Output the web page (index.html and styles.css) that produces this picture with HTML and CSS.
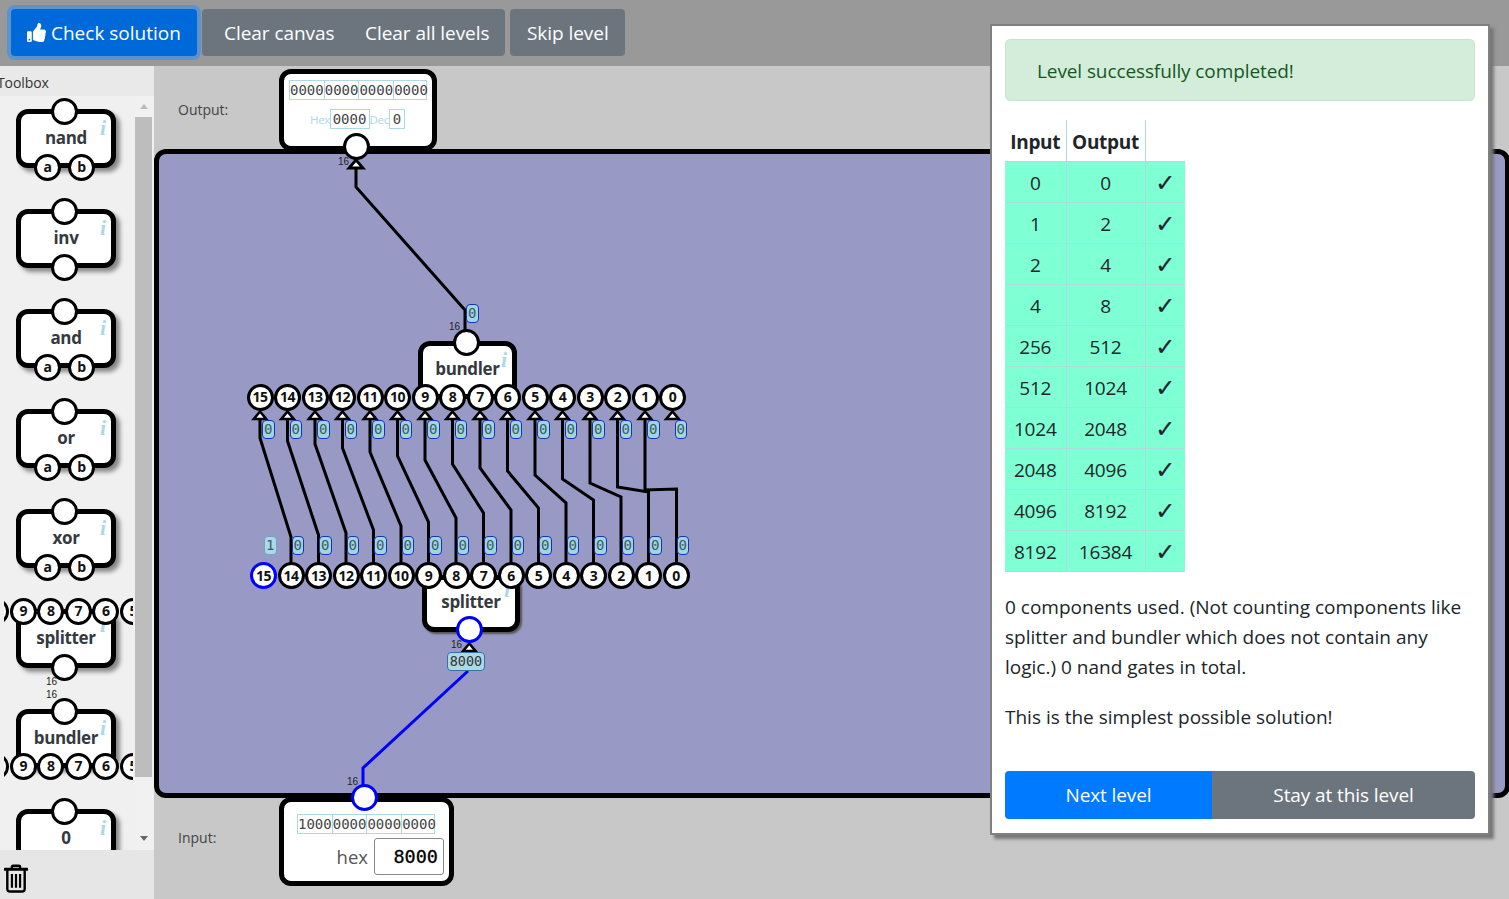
FILE: index.html
```html
<!DOCTYPE html>
<html lang="en">
<head>
<meta charset="utf-8">
<title>Level</title>
<link rel="stylesheet" href="styles.css">
</head>
<body>
<header class="topbar">
  <button class="btn btn-primary">
    <svg class="thumb" viewBox="0 0 512 512"><path fill="#fff" d="M104 224H24c-13.255 0-24 10.745-24 24v240c0 13.255 10.745 24 24 24h80c13.255 0 24-10.745 24-24V248c0-13.255-10.745-24-24-24zM64 472c-13.255 0-24-10.745-24-24s10.745-24 24-24 24 10.745 24 24-10.745 24-24 24zM384 81.452c0 42.416-25.97 66.208-33.277 94.548h101.723c33.397 0 59.397 27.746 59.553 58.098.084 17.938-7.546 37.249-19.439 49.197l-.11.11c9.836 23.337 8.237 56.037-9.308 79.469 8.681 25.895-.069 57.704-16.382 74.757 4.298 17.598 2.244 32.575-6.148 44.632C440.202 511.587 389.616 512 346.839 512l-2.845-.001c-48.287-.017-87.806-17.598-119.56-31.725-15.957-7.099-36.821-15.887-52.651-16.178-6.54-.12-11.783-5.457-11.783-11.998v-213.77c0-3.2 1.282-6.271 3.558-8.521 39.614-39.144 56.648-80.587 89.117-113.111 14.804-14.832 20.188-37.236 25.393-58.902C282.515 39.293 291.817 0 312 0c24 0 72 8 72 81.452z"/></svg>
    <span>Check solution</span>
  </button>
  <div class="btn-group">
    <button class="btn btn-grey btn-clear">Clear canvas</button>
    <button class="btn btn-grey btn-all">Clear all levels</button>
  </div>
  <button class="btn btn-grey btn-skip">Skip level</button>
</header>

<main class="main">
  <aside class="sidebar">
    <div class="toolbox-title">Toolbox</div>
    <div class="tool-area">
      <div class="tool-list">
        <div class="comp"><span class="pin p-top"></span><b class="name">nand</b><i class="info">i</i><span class="pin p-a">a</span><span class="pin p-b">b</span></div>
        <div class="comp"><span class="pin p-top"></span><b class="name">inv</b><i class="info">i</i><span class="pin p-bottom"></span></div>
        <div class="comp"><span class="pin p-top"></span><b class="name">and</b><i class="info">i</i><span class="pin p-a">a</span><span class="pin p-b">b</span></div>
        <div class="comp"><span class="pin p-top"></span><b class="name">or</b><i class="info">i</i><span class="pin p-a">a</span><span class="pin p-b">b</span></div>
        <div class="comp"><span class="pin p-top"></span><b class="name">xor</b><i class="info">i</i><span class="pin p-a">a</span><span class="pin p-b">b</span></div>
        <div class="comp">
          <div class="pin-row row-tool-top"><span class="pin">15</span><span class="pin">14</span><span class="pin">13</span><span class="pin">12</span><span class="pin">11</span><span class="pin">10</span><span class="pin">9</span><span class="pin">8</span><span class="pin">7</span><span class="pin">6</span><span class="pin">5</span><span class="pin">4</span><span class="pin">3</span><span class="pin">2</span><span class="pin">1</span><span class="pin">0</span></div>
          <b class="name">splitter</b><i class="info info-low">i</i><span class="pin p-bottom"></span><span class="wl wl-under">16</span>
        </div>
        <div class="comp">
          <span class="wl wl-over">16</span><span class="pin p-top"></span><b class="name">bundler</b><i class="info">i</i>
          <div class="pin-row row-tool-bottom"><span class="pin">15</span><span class="pin">14</span><span class="pin">13</span><span class="pin">12</span><span class="pin">11</span><span class="pin">10</span><span class="pin">9</span><span class="pin">8</span><span class="pin">7</span><span class="pin">6</span><span class="pin">5</span><span class="pin">4</span><span class="pin">3</span><span class="pin">2</span><span class="pin">1</span><span class="pin">0</span></div>
        </div>
        <div class="comp"><span class="pin p-top"></span><b class="name">0</b><i class="info">i</i></div>
      </div>
      <div class="scrollbar">
        <div class="sb-btn"><span class="arrow-up"></span></div>
        <div class="sb-thumb"></div>
        <div class="sb-track"></div>
        <div class="sb-btn sb-btn-down"><span class="arrow-down"></span></div>
      </div>
    </div>
    <div class="trash-area">
      <svg class="trash" viewBox="0 0 26 30" fill="none" stroke="#000" stroke-width="2.6">
        <path d="M8.5 4.5V2.6a1.4 1.4 0 0 1 1.4-1.4h6.2a1.4 1.4 0 0 1 1.4 1.4v1.9"/>
        <path d="M1 5h24" stroke-width="3.2" stroke-linecap="round"/>
        <path d="M3.6 6v20.5a2.6 2.6 0 0 0 2.6 2.6h13.6a2.6 2.6 0 0 0 2.6-2.6V6"/>
        <path d="M8.6 10v15M13 10v15M17.4 10v15" stroke-width="2.4"/>
      </svg>
    </div>
  </aside>

  <section class="workspace">
    <div class="lbl lbl-output">Output:</div>
    <div class="lbl lbl-input">Input:</div>
    <div class="canvas"></div>

    <svg class="wires" viewBox="154 66 1355 833" fill="none">
      <defs>
        <polygon id="tri" points="0,-7.5 -6.2,0 6.2,0" fill="#fff" stroke="#000" stroke-width="2.6"/>
        <polygon id="tri-big" points="0,-8 -7,0 7,0" fill="#fff" stroke="#000" stroke-width="2.8"/>
      </defs>
      <g stroke="#000" stroke-width="3">
        <path d="M356 168V187L465 310V332"/>
        <path d="M260 420V438L291 537V575"/>
        <path d="M287.5 420V441L318.5 535V575"/>
        <path d="M315 420V444L346 533V575"/>
        <path d="M342.5 420V448L373.5 530V575"/>
        <path d="M370 420V452L401 526V575"/>
        <path d="M397.5 420V456L428.5 522V575"/>
        <path d="M425 420V460L456 518V575"/>
        <path d="M452.5 420V464L483.5 513V575"/>
        <path d="M480 420V468L511 510V575"/>
        <path d="M507.5 420V471L538.5 508V575"/>
        <path d="M535 420V475L566 503V575"/>
        <path d="M562.5 420V479L593.5 500V575"/>
        <path d="M590 420V483L621 497V575"/>
        <path d="M617.5 420V487L648.5 492V575"/>
        <path d="M645 420V490L676.5 489V575"/>
      </g>
      <path d="M363 790V768L468 671" stroke="#0000ff" stroke-width="3"/>
      <use href="#tri" x="260" y="419"/><use href="#tri" x="287.5" y="419"/><use href="#tri" x="315" y="419"/><use href="#tri" x="342.5" y="419"/>
      <use href="#tri" x="370" y="419"/><use href="#tri" x="397.5" y="419"/><use href="#tri" x="425" y="419"/><use href="#tri" x="452.5" y="419"/>
      <use href="#tri" x="480" y="419"/><use href="#tri" x="507.5" y="419"/><use href="#tri" x="535" y="419"/><use href="#tri" x="562.5" y="419"/>
      <use href="#tri" x="590" y="419"/><use href="#tri" x="617.5" y="419"/><use href="#tri" x="645" y="419"/><use href="#tri" x="672.5" y="419"/>
      <use href="#tri-big" x="356" y="168"/>
      <use href="#tri" x="469.3" y="651"/>
      <g class="wire-label">
        <text x="338" y="165">16</text>
        <text x="449" y="330">16</text>
        <text x="451" y="648">16</text>
        <text x="347" y="785">16</text>
      </g>
    </svg>

    <div class="node box-output">
      <div class="bits"><span>0000</span><span>0000</span><span>0000</span><span>0000</span></div>
      <div class="hexrow"><small>Hex</small><span class="val val-hex">0000</span><small>Dec</small><span class="val val-dec">0</span></div>
    </div>
    <span class="pin free pin-output"></span>

    <div class="node comp comp-bundler">
      <span class="pin p-top-canvas"></span><b class="name">bundler</b><i class="info">i</i>
      <div class="pin-row row-bundler"><span class="pin">15</span><span class="pin">14</span><span class="pin">13</span><span class="pin">12</span><span class="pin">11</span><span class="pin">10</span><span class="pin">9</span><span class="pin">8</span><span class="pin">7</span><span class="pin">6</span><span class="pin">5</span><span class="pin">4</span><span class="pin">3</span><span class="pin">2</span><span class="pin">1</span><span class="pin">0</span></div>
    </div>

    <div class="node comp comp-splitter">
      <b class="name">splitter</b><i class="info">i</i>
      <div class="pin-row row-splitter"><span class="pin pin-blue">15</span><span class="pin">14</span><span class="pin">13</span><span class="pin">12</span><span class="pin">11</span><span class="pin">10</span><span class="pin">9</span><span class="pin">8</span><span class="pin">7</span><span class="pin">6</span><span class="pin">5</span><span class="pin">4</span><span class="pin">3</span><span class="pin">2</span><span class="pin">1</span><span class="pin">0</span></div>
      <span class="pin pin-blue p-bottom-canvas"></span>
    </div>

    <div class="badge-row badges-top"><span class="badge">0</span><span class="badge">0</span><span class="badge">0</span><span class="badge">0</span><span class="badge">0</span><span class="badge">0</span><span class="badge">0</span><span class="badge">0</span><span class="badge">0</span><span class="badge">0</span><span class="badge">0</span><span class="badge">0</span><span class="badge">0</span><span class="badge">0</span><span class="badge">0</span><span class="badge">0</span></div>
    <div class="badge-row badges-bottom"><span class="badge badge-on">1</span><span class="badge">0</span><span class="badge">0</span><span class="badge">0</span><span class="badge">0</span><span class="badge">0</span><span class="badge">0</span><span class="badge">0</span><span class="badge">0</span><span class="badge">0</span><span class="badge">0</span><span class="badge">0</span><span class="badge">0</span><span class="badge">0</span><span class="badge">0</span><span class="badge">0</span></div>
    <span class="badge free badge-bundle">0</span>
    <span class="badge badge-on free badge-input">8000</span>

    <div class="node box-input">
      <div class="bits"><span>1000</span><span>0000</span><span>0000</span><span>0000</span></div>
      <div class="inputrow"><span class="hexlabel">hex</span><span class="hexinput">8000</span></div>
    </div>
    <span class="pin pin-blue free pin-input"></span>
  </section>
</main>

<div class="dialog">
  <div class="alert">Level successfully completed!</div>
  <table class="truth">
    <thead><tr><th>Input</th><th>Output</th><th class="blank"></th></tr></thead>
    <tbody>
      <tr><td>0</td><td>0</td><td class="ok">✓</td></tr>
      <tr><td>1</td><td>2</td><td class="ok">✓</td></tr>
      <tr><td>2</td><td>4</td><td class="ok">✓</td></tr>
      <tr><td>4</td><td>8</td><td class="ok">✓</td></tr>
      <tr><td>256</td><td>512</td><td class="ok">✓</td></tr>
      <tr><td>512</td><td>1024</td><td class="ok">✓</td></tr>
      <tr><td>1024</td><td>2048</td><td class="ok">✓</td></tr>
      <tr><td>2048</td><td>4096</td><td class="ok">✓</td></tr>
      <tr><td>4096</td><td>8192</td><td class="ok">✓</td></tr>
      <tr><td>8192</td><td>16384</td><td class="ok">✓</td></tr>
    </tbody>
  </table>
  <p class="para">0 components used. (Not counting components like splitter and bundler which does not contain any logic.) 0 nand gates in total.</p>
  <p class="para para-2">This is the simplest possible solution!</p>
  <div class="actions">
    <button class="act act-next">Next level</button>
    <button class="act act-stay">Stay at this level</button>
  </div>
</div>
</body>
</html>
```
FILE: styles.css
```css
* { box-sizing: border-box; }
html, body { margin: 0; height: 899px; overflow: hidden; }
body { position: relative; background: #c8c8c8; font-family: "Open Sans", "Noto Sans", sans-serif; color: #212529; }

/* top bar */
.topbar { display: flex; align-items: flex-start; gap: 5px; height: 66px; padding: 9px 0 0 11px; background: #999; }
.btn { height: 47px; border: 0; border-radius: 4px; color: #fff; font: 19px "Open Sans", sans-serif; letter-spacing: -.05px; display: flex; align-items: center; }
.btn-primary { width: 186px; padding: 0 0 0 16px; background: #0069d9; box-shadow: 0 0 0 4px #5b93cf; gap: 5px; letter-spacing: 0; }
.thumb { width: 19px; height: 19px; }
.btn-grey { background: #6c757d; }
.btn-group { display: flex; }
.btn-clear { width: 147px; padding-left: 22px; border-radius: 4px 0 0 4px; }
.btn-all { width: 156px; padding-left: 16px; border-radius: 0 4px 4px 0; }
.btn-skip { width: 115px; padding-left: 17px; }

/* layout */
.main { display: flex; height: 833px; }
.sidebar { width: 154px; flex: none; display: flex; flex-direction: column; background: #e9e9e9; }
.toolbox-title { height: 30px; margin-left: -3px; padding-top: 7px; font-size: 14px; line-height: 20px; color: #333; letter-spacing: -.1px; }
.tool-area { display: flex; gap: 2px; height: 754px; padding-left: 4px; background: #f0f0f0; }
.tool-list { width: 129px; overflow: hidden; display: flex; flex-direction: column; gap: 41px; padding: 13px 0 0 12px; }
.scrollbar { width: 17px; display: flex; flex-direction: column; background: #f1f1f1; }
.sb-btn { height: 21px; flex: none; display: flex; align-items: center; justify-content: center; }
.sb-thumb { height: 660px; flex: none; background: #bdbdbd; }
.sb-track { flex: 1; }
.sb-btn-down { height: 24px; }
.arrow-up { border: 4.5px solid transparent; border-top: 0; border-bottom: 5px solid #bbb; }
.arrow-down { border: 4.5px solid transparent; border-bottom: 0; border-top: 5px solid #666; }
.trash-area { flex: 1; background: #e6e6e6; padding: 14px 0 0 4px; }
.trash { display: block; width: 24px; height: 29px; }

/* components */
.comp { position: relative; flex: none; width: 100px; height: 59px; border: 5px solid #000; border-radius: 12px; background: #fff; box-shadow: 4px 4px 4px #888; display: flex; align-items: center; justify-content: center; padding-bottom: 2px; }
.name { font-size: 17px; font-weight: 700; color: #343a40; line-height: 24px; letter-spacing: -.35px; }
.info { position: absolute; right: 5px; top: 4px; font: italic 700 22px/20px "Liberation Serif", serif; color: #add8e6; }
.info-low { top: 1px; }
.pin { position: relative; flex: none; display: flex; align-items: center; justify-content: center; width: 27px; height: 27px; border: 3px solid #000; border-radius: 50%; background: #fff; font: 700 14px/1 "Open Sans", sans-serif; color: #111; letter-spacing: -.5px; }
.pin-blue { border-color: #0000ff; }
.p-top, .p-a, .p-b, .p-bottom, .p-top-canvas, .p-bottom-canvas { position: absolute; }
.p-top { left: 30px; top: -16.5px; }
.p-bottom { left: 30px; top: 39.5px; }
.p-a { left: 13px; top: 39.5px; }
.p-b { left: 47px; top: 39.5px; }
.pin-row { position: absolute; display: flex; gap: .5px; z-index: 1; }
.row-tool-top { left: -176.2px; top: -16.5px; }
.row-tool-bottom { left: -176.2px; top: 38.5px; }
.wl { position: absolute; left: 25px; font: 10px "Liberation Sans", sans-serif; color: #222; }
.wl-under { top: 62px; }
.wl-over { top: -25px; }

/* workspace: a free canvas */
.workspace { position: relative; flex: 1; min-width: 0; overflow: hidden; }
.canvas { position: absolute; left: 0; right: -1px; top: 83px; height: 649px; background: #9999c6; border: 5px solid #000; border-radius: 12px; }
.wires { position: absolute; left: 0; top: 0; width: 1355px; height: 833px; }
.wire-label text { font: 10px "Liberation Sans", sans-serif; fill: #222; stroke: none; }
.lbl { position: absolute; left: 24px; font-size: 14px; line-height: 20px; color: #444; }
.lbl-output { top: 34px; }
.lbl-input { top: 762px; }
.node { position: absolute; }
.free { position: absolute; }
.box-output { left: 125px; top: 3px; width: 158px; height: 82px; border: 5px solid #000; border-radius: 12px; background: #fff; padding: 6px 0 0 5px; }
.box-input { left: 125px; top: 731px; width: 175px; height: 89px; border: 5px solid #000; border-radius: 12px; background: #fff; padding: 12px 0 0 13px; }
.bits { display: flex; width: 138px; height: 20px; border: 1px solid #add8e6; font: 14px/18px "DejaVu Sans Mono", monospace; color: #444; }
.bits span { flex: 1; text-align: center; border-right: 1px solid #add8e6; }
.bits span:last-child { border-right: 0; }
.hexrow { display: flex; align-items: center; margin: 9px 0 0 21px; height: 20px; }
.hexrow small { font-size: 11.5px; color: #add8e6; width: 19.5px; letter-spacing: -.3px; }
.val { height: 20px; border: 1px solid #add8e6; font: 14px/18px "DejaVu Sans Mono", monospace; color: #444; text-align: center; }
.val-hex { width: 40px; }
.val-dec { width: 16px; }
.inputrow { display: flex; align-items: center; justify-content: flex-end; gap: 6px; margin: 4px 5px 0 0; }
.hexlabel { font-size: 18.5px; color: #555; }
.hexinput { width: 70px; height: 37px; border: 1px solid #888; border-radius: 3px; text-align: right; padding-right: 5px; font: 18.5px/35px "DejaVu Sans Mono", monospace; color: #000; -webkit-text-stroke: .3px #000; }

.comp-bundler { left: 264px; top: 275px; width: 99px; height: 58px; box-shadow: none; padding: 0 0 2px; }
.p-top-canvas { left: 29.5px; top: -17.5px; }
.row-bundler { left: -176.5px; top: 37.5px; }
.comp-splitter { left: 268px; top: 509px; width: 98px; height: 57px; box-shadow: 2px 2px 2px #555; padding: 0 0 4px; }
.comp-splitter .info { top: 0; }
.row-splitter { left: -177px; top: -17.8px; }
.p-bottom-canvas { left: 29px; top: 35.5px; }
.pin-output { left: 188.5px; top: 66.5px; }
.pin-input { left: 197.2px; top: 717.8px; }

.badge-row { position: absolute; display: flex; gap: 15px; }
.badges-top { left: 108px; top: 353.5px; }
.badges-bottom { left: 110px; top: 469.5px; }
.badge { display: block; width: 12.5px; height: 19px; border: 1px solid #1c2fb5; border-radius: 4px; background: #9fd6e3; font: 14px/17px "DejaVu Sans Mono", monospace; color: #3d5a62; text-align: center; overflow: hidden; }
.badge-on { border-color: #6aa6c9; background: #add8e6; }
.badge-bundle { left: 312px; top: 237.5px; }
.badge-input { left: 293px; top: 586px; width: 38px; color: #333; border-color: #3a6fa8; font-size: 13.5px; }

/* dialog */
.dialog { position: absolute; left: 990px; top: 24px; width: 500px; height: 811px; padding: 13px 13px 0 13px; background: #fff; border: 2px solid #808080; box-shadow: 4px 4px 3px #777; font-size: 19px; }
.alert { height: 62px; padding: 0 31px; border: 1px solid #c3e6cb; border-radius: 5px; background: #d4edda; color: #155724; line-height: 62px; letter-spacing: -.1px; }
.truth { margin-top: 19px; border-collapse: collapse; table-layout: fixed; width: 180px; }
.truth th { width: 61px; height: 41px; font-weight: 700; border-right: 1px solid #add8e6; padding: 4px 0 0; letter-spacing: -.3px; }
.truth th:nth-child(2) { width: 79px; }
.truth th.blank { width: 40px; border-right: 0; }
.truth td { height: 41px; padding: 2px 0 0; text-align: center; background: #7fffd4; border: 1px solid #a8dce0; border-left: 0; border-right: 1px solid #a8dce0; letter-spacing: -.2px; }
.truth td.ok { border-right: 0; font: 700 24px/1 "DejaVu Sans", sans-serif; -webkit-text-stroke: .2px #212529; }
.para { margin: 20px 0 0; line-height: 30px; width: 470px; }
.para-2 { margin-top: 20px; }
.actions { display: flex; margin-top: 39px; width: 470px; }
.act { height: 48px; border: 0; color: #fff; font: 19px "Open Sans", sans-serif; letter-spacing: -.1px; }
.act-next { width: 207px; background: #007bff; border-radius: 4px 0 0 4px; }
.act-stay { width: 263px; background: #6c757d; border-radius: 0 4px 4px 0; }
```
